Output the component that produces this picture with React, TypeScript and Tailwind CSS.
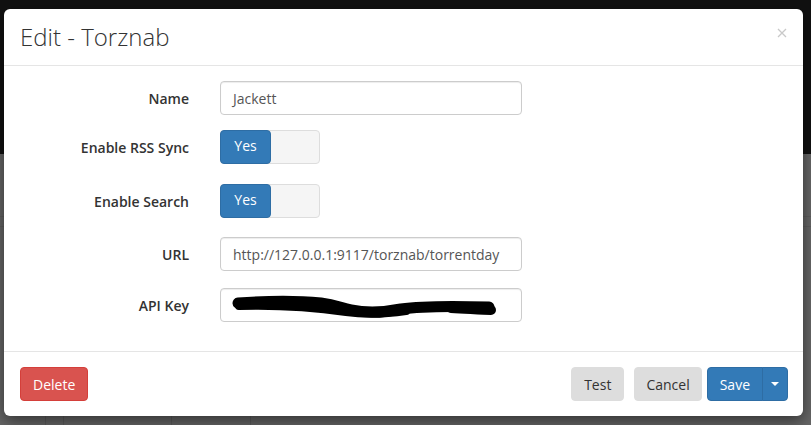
import React from "react";

function Row({ label, children, className = "" }: { label: string; children: React.ReactNode; className?: string }) {
  return (
    <div className={`flex items-center ${className}`}>
      <div className="w-[170px] text-right text-[14px] font-semibold text-[#333]">{label}</div>
      <div className="ml-[31px]">{children}</div>
    </div>
  );
}

function Toggle() {
  return (
    <div className="flex h-[34px] w-[100px] rounded-[4px] border border-[#ddd] bg-[#f5f5f5]">
      <div className="-m-px flex h-[34px] w-[51px] items-center justify-center rounded-[4px] border border-[#2e6da4] bg-[#337ab7] pb-[3px] text-[14px] text-white">
        Yes
      </div>
    </div>
  );
}

function Input({ children }: { children?: React.ReactNode }) {
  return (
    <div className="relative flex h-[34px] w-[302px] items-center rounded-[4px] border border-[#ccc] bg-white px-[12px] text-[14px] text-[#555] shadow-[inset_0_1px_1px_rgba(0,0,0,0.075)]">
      {children}
    </div>
  );
}

export default function App() {
  return (
    <div className="relative h-[425px] w-[811px] overflow-hidden bg-[#666] [font-family:'Open_Sans',sans-serif]">
      <div className="flex h-full flex-col">
        <div className="h-[154px] bg-[#111]" />
        <div className="mt-[62px] h-px bg-[#5e5e5e]" />
        <div className="mt-[9px] h-px bg-[#5e5e5e]" />
        <div className="flex-1" />
        <div className="flex h-[12px]">
          <div className="ml-[45px] w-px bg-[#5a5a5a]" />
          <div className="ml-[17px] w-px bg-[#5a5a5a]" />
          <div className="ml-[107px] w-[80px] rounded-t-[3px] border border-b-0 border-[#5a5a5a]" />
        </div>
      </div>

      <div className="absolute left-[4px] top-[9px] w-[799px] rounded-[6px] bg-white shadow-[0_5px_15px_rgba(0,0,0,0.5)]">
        <div className="relative border-b border-[#e5e5e5] px-[16px] py-[15px]">
          <div className="text-[24px] font-light leading-[26px] text-[#333]">Edit - Torznab</div>
          <svg className="absolute right-[16px] top-[19px]" width="10" height="10" viewBox="0 0 10 10">
            <path d="M1 1 L9 9 M9 1 L1 9" stroke="#c9c9c9" strokeWidth="1.3" />
          </svg>
        </div>

        <div className="flex flex-col px-[15px] pb-[29px] pt-[15px]">
          <Row label="Name">
            <Input>Jackett</Input>
          </Row>
          <Row label="Enable RSS Sync" className="mt-[15px]">
            <Toggle />
          </Row>
          <Row label="Enable Search" className="mt-[20px]">
            <Toggle />
          </Row>
          <Row label="URL" className="mt-[19px]">
            <Input>http://127.0.0.1:9117/torznab/torrentday</Input>
          </Row>
          <Row label="API Key" className="mt-[17px]">
            <Input>
              <svg className="absolute left-0 top-0" width="300" height="32" viewBox="0 0 300 32">
                <path
                  d="M17 14 C45 12, 80 12, 100 14 C115 16, 120 19, 130 21 C145 24, 165 23, 180 20 C200 17, 235 17, 268 18"
                  stroke="#000"
                  strokeWidth="11"
                  fill="none"
                  strokeLinecap="round"
                />
                <path d="M18 17 C50 16, 90 18, 125 23 C145 26, 165 25, 185 22" stroke="#000" strokeWidth="8" fill="none" strokeLinecap="round" />
                <path d="M230 19 C250 20, 262 21, 270 21" stroke="#000" strokeWidth="10" fill="none" strokeLinecap="round" />
              </svg>
            </Input>
          </Row>
        </div>

        <div className="flex items-center border-t border-[#e5e5e5] py-[15px] pl-[16px] pr-[15px]">
          <button className="h-[34px] rounded-[4px] border border-[#d43f3a] bg-[#d9534f] px-[12px] text-[14px] text-white">
            Delete
          </button>
          <div className="flex-1" />
          <button className="h-[34px] rounded-[4px] border border-[#ddd] bg-[#ddd] px-[12px] text-[14px] text-[#333]">Test</button>
          <button className="ml-[10px] h-[34px] rounded-[4px] border border-[#ddd] bg-[#ddd] px-[11px] text-[14px] text-[#333]">
            Cancel
          </button>
          <div className="ml-[5px] flex h-[34px]">
            <button className="rounded-l-[4px] border border-[#2e6da4] bg-[#337ab7] px-[12px] text-[14px] text-white">Save</button>
            <button className="-ml-px flex w-[26px] items-center justify-center rounded-r-[4px] border border-[#2e6da4] bg-[#337ab7]">
              <svg width="8" height="4" viewBox="0 0 8 4">
                <path d="M0 0 L8 0 L4 4 Z" fill="#fff" />
              </svg>
            </button>
          </div>
        </div>
      </div>
    </div>
  );
}
